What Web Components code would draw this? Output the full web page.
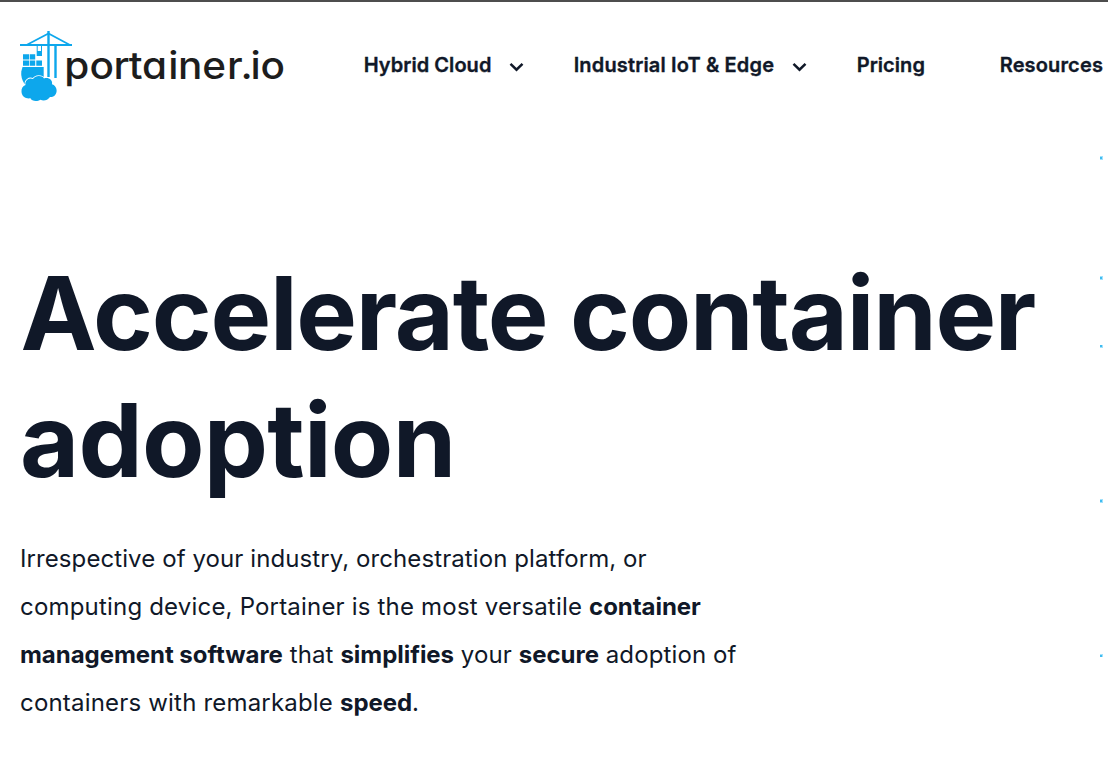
<!DOCTYPE html>
<html lang="en"><head><meta charset="utf-8"><title>Portainer</title>
<style>body{margin:0;background:#fff;color:#101828;font-family:Inter,sans-serif;overflow:hidden}</style></head>
<body><site-page></site-page>
<script>
const define=(name,html)=>customElements.define(name,class extends HTMLElement{
  constructor(){super();this.attachShadow({mode:'open'}).innerHTML=html}
});
define('site-logo',`<style>:host{display:block;width:270px;height:76px;flex:none}svg{display:block}text{font:500 37.500px Inter,sans-serif;font-feature-settings:"cv11";fill:#1d1d1d}</style>
<svg width="270" height="76" viewBox="18 28 270 76">
<g fill="#0da7ec"><path d="M20 44h52v2H20zM47.300 31h2.400v46h-2.400zM36.700 46h1v5h-1zM41 46h1v5h-1zM54.300 45h2.400v33h-2.400z"/>
<path d="M27 44.700L48.500 33.500l21 11.200" fill="none" stroke="#0da7ec" stroke-width="1.700"/>
<path d="M36.700 51h5.300v5h-5.300zM23 54.300h6v5.200h-6zM29.700 54.300h5.500v5.200h-5.500zM23 60.400h6v5.300h-6zM29.700 60.400h5.500v5.300h-5.500zM36.300 60.400h5.700v5.300h-5.700z"/>
<path d="M22.500 67H43.700v11L33 84H24.500c-2.500-4-3.700-8-3.200-12.500z"/>
<path d="M25.500 85c-1-4.500 3.500-8 7.500-6 2.500-4 9-3.800 11-.6 4.500-1.400 9 1.500 8 5.800 2.700.8 4.300 3 4.600 5.700.4 4.300-2.800 7.600-6.600 7.100-2.500 3.500-6.500 4.300-9.500 2.800-3.500 2.200-9 1.500-10-1.500-4.500.8-8.500-1.500-9-6.300-.3-3.500 1.300-6 4-7z" stroke="#fff" stroke-width="1.600" paint-order="stroke"/></g>
<text y="79.300" transform="scale(1.08 1)" x="59.400 82.800 105.100 119.300 131.400 155.700 164.900 187.300 210.300 222.600 231.900 241.100">portainer.io</text></svg>`);
define('nav-item',`<style>:host{display:flex;align-items:center;white-space:nowrap;font-size:20px;font-weight:600;line-height:30px;letter-spacing:var(--track,.05px);-webkit-text-stroke:.35px #101828}svg{display:none;margin:3px 0 0 17.500px}:host([menu]) svg{display:block}</style>
<span><slot></slot></span><svg width="15" height="10" viewBox="0 0 15 10"><path d="M1.500 1.800l6 5.900 6-5.900" fill="none" stroke="#101828" stroke-width="2.500"/></svg>`);
define('site-header',`<style>:host{display:flex;height:130px;box-sizing:border-box;border-top:2px solid #4d4d4d;padding-left:18px;align-items:center}
nav{display:grid;grid-template-columns:210px 283px 143px max-content;margin:-2px 0 0 75.700px}.wide{--track:.15px}</style>
<site-logo></site-logo><nav><nav-item menu>Hybrid Cloud</nav-item><nav-item menu class="wide">Industrial IoT &amp; Edge</nav-item><nav-item>Pricing</nav-item><nav-item class="wide">Resources</nav-item></nav>`);
define('hero-copy',`<style>:host{display:block;padding:120px 0 0 20px}
h1{margin:0;font-size:102px;line-height:127px;font-weight:700;letter-spacing:-.75px;white-space:nowrap;text-indent:.500px}
.long{letter-spacing:-1.280px}
p{margin:30.500px 0 0;font-size:24px;line-height:48px;white-space:nowrap;letter-spacing:.12px}b{font-weight:700;letter-spacing:-.04px}.first{letter-spacing:.09px}.second{letter-spacing:.19px}</style>
<h1><span class="long">Accelerate container</span><br>adoption</h1>
<p><span class="first">Irrespective of your industry, orchestration platform, or</span><br><span class="second">computing device, Portainer is the most versatile <b>container</b></span><br><b>management software</b> that <b>simplifies</b> your <b>secure</b> adoption of<br><span class="second">containers with remarkable <b>speed</b>.</span></p>`);
define('accent-dots',`<style>:host{position:absolute;left:1100px;top:0}svg{display:block}</style>
<svg width="8" height="775" shape-rendering="crispEdges"><g fill="#a2e1fb"><path d="M0 156h3v4H0zM0 276h3v4H0zM0 345h3v3H0zM0 499h3v4H0zM0 654h3v3H0z"/></g><g fill="#3fbbf0"><path d="M0 157h2v2H0zM0 277h2v2H0zM0 345h2v2H0zM0 500h2v2H0zM0 655h2v2H0z"/></g></svg>`);
define('site-page',`<style>:host{display:block;position:relative;height:775px;overflow:hidden}</style><site-header></site-header><hero-copy></hero-copy><accent-dots></accent-dots>`);
</script></body></html>
